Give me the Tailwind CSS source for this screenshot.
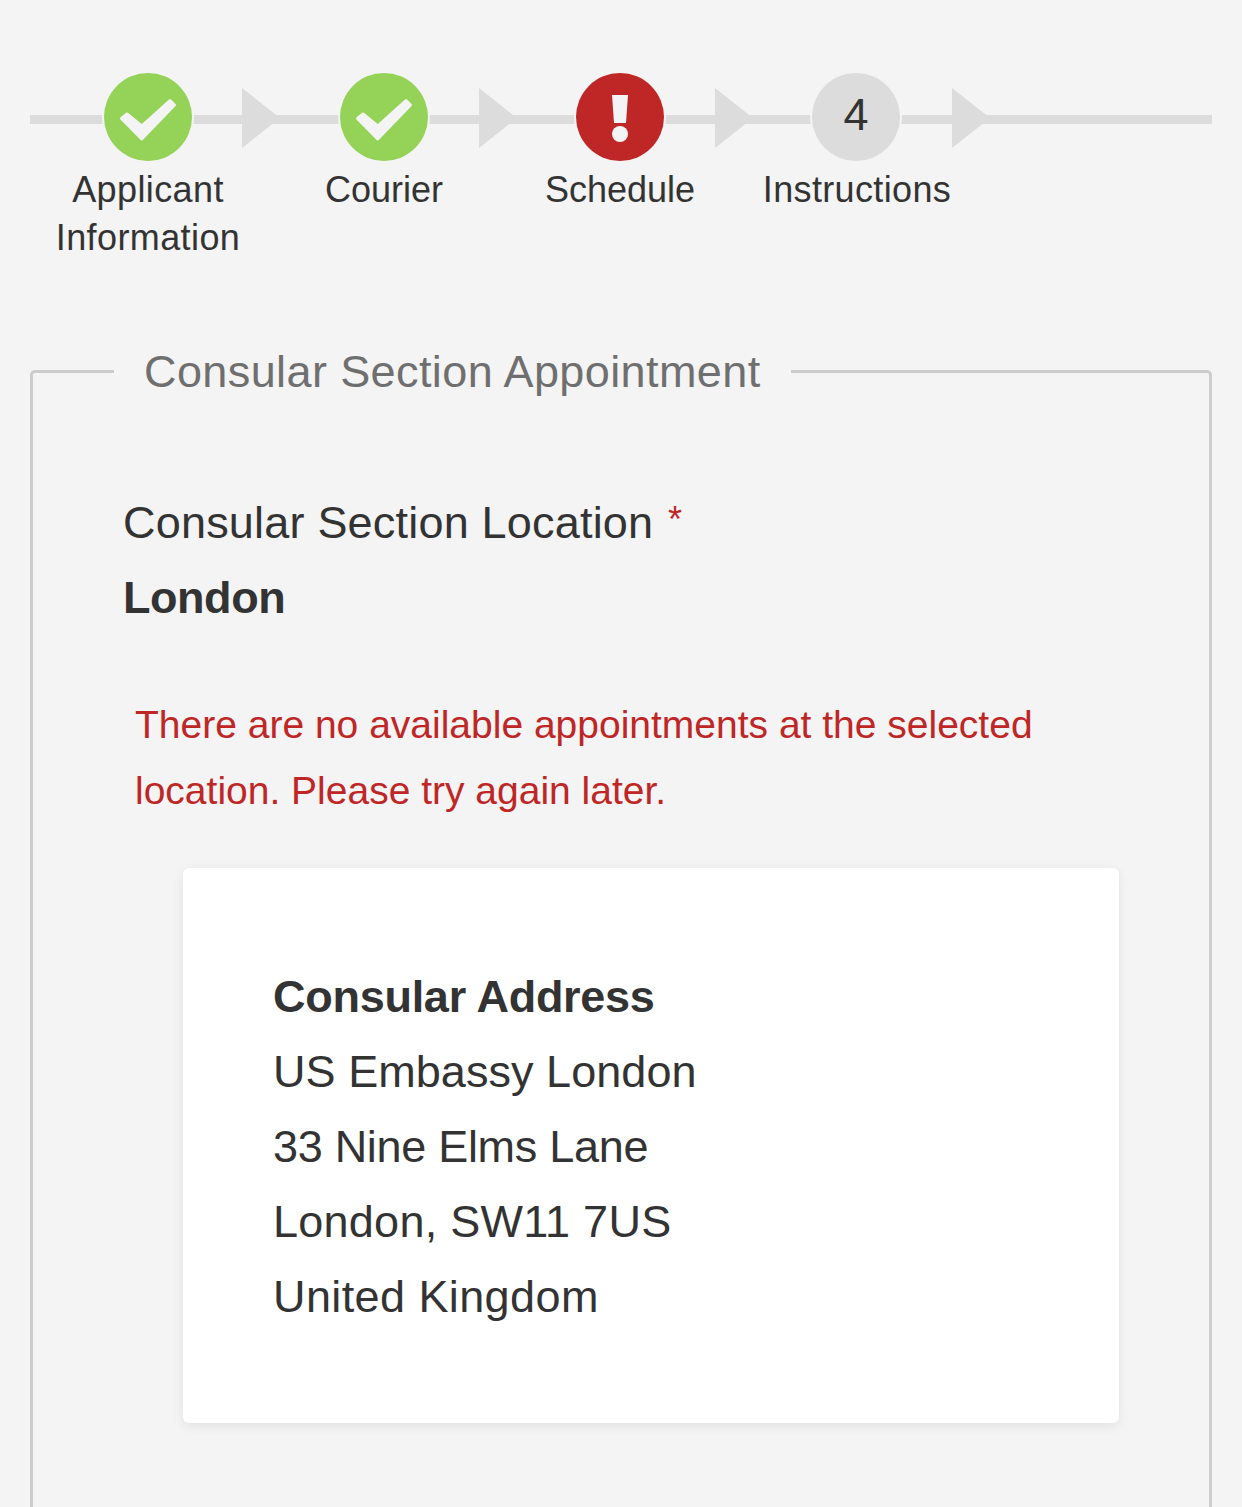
<!DOCTYPE html>
<html>
<head>
<meta charset="utf-8">
<script src="https://cdn.jsdelivr.net/npm/@tailwindcss/browser@4"></script>
</head>
<body class="bg-[#f4f4f4] font-['Liberation_Sans',Arial,sans-serif] text-[#333333] overflow-hidden h-[1507px]">
<div class="px-[30px] pt-[73px]">
  <div class="relative h-[198px]">
    <div class="absolute left-0 right-0 top-[42px] h-[9px] bg-[#dcdcdc]"></div>
    <div class="relative flex">
      <div class="relative w-[236px] flex flex-col items-center">
        <div class="w-[87.5px] h-[87.5px] rounded-full bg-[#94d258] ring-2 ring-[#f4f4f4] flex items-center justify-center">
          <svg class="w-[60px] h-[52px]" viewBox="0 0 60 52"><path d="M52 9.500 L56.500 14 L23.700 48 L3.500 27.500 L9 23 L23.700 35 Z" fill="#f4f4f4" stroke="#f4f4f4" stroke-width="3" stroke-linejoin="round"/></svg>
        </div>
        <div class="mt-[5.5px] text-[36px] leading-[48px] text-center w-[200px] tracking-[0.4px]">Applicant Information</div>
        <svg class="absolute left-[212px] top-[15px] w-[38px] h-[60px]" viewBox="0 0 38 60"><path d="M0 0 L38 30 L0 60 Z" fill="#dcdcdc"/></svg>
      </div>
      <div class="relative w-[236px] flex flex-col items-center">
        <div class="w-[87.5px] h-[87.5px] rounded-full bg-[#94d258] ring-2 ring-[#f4f4f4] flex items-center justify-center">
          <svg class="w-[60px] h-[52px]" viewBox="0 0 60 52"><path d="M52 9.500 L56.500 14 L23.700 48 L3.500 27.500 L9 23 L23.700 35 Z" fill="#f4f4f4" stroke="#f4f4f4" stroke-width="3" stroke-linejoin="round"/></svg>
        </div>
        <div class="mt-[5.5px] text-[36px] leading-[48px] text-center w-[200px]">Courier</div>
        <svg class="absolute left-[213px] top-[15px] w-[38px] h-[60px]" viewBox="0 0 38 60"><path d="M0 0 L38 30 L0 60 Z" fill="#dcdcdc"/></svg>
      </div>
      <div class="relative w-[236px] flex flex-col items-center">
        <div class="w-[87.5px] h-[87.5px] rounded-full bg-[#bf2626] ring-2 ring-[#f4f4f4] flex items-center justify-center">
          <svg class="w-[20px] h-[50px]" viewBox="0 0 20 50"><path d="M2 3 H18 L16 31 H4 Z" fill="#f4f4f4"/><circle cx="10" cy="42" r="8" fill="#f4f4f4"/></svg>
        </div>
        <div class="mt-[5.5px] text-[36px] leading-[48px] text-center w-[200px]">Schedule</div>
        <svg class="absolute left-[213px] top-[15px] w-[38px] h-[60px]" viewBox="0 0 38 60"><path d="M0 0 L38 30 L0 60 Z" fill="#dcdcdc"/></svg>
      </div>
      <div class="relative w-[236px] flex flex-col items-center">
        <div class="w-[87.5px] h-[87.5px] rounded-full bg-[#dcdcdc] ring-2 ring-[#f4f4f4] flex items-center justify-center text-[45px] leading-none pb-[5px]">4</div>
        <div class="mt-[5.5px] text-[36px] leading-[48px] text-center w-[200px] tracking-[0.35px] translate-x-[1px]">Instructions</div>
        <svg class="absolute left-[214px] top-[15px] w-[38px] h-[60px]" viewBox="0 0 38 60"><path d="M0 0 L38 30 L0 60 Z" fill="#dcdcdc"/></svg>
      </div>
    </div>
  </div>

  <fieldset class="mt-[73px] border-[3px] border-[#cccccc] rounded-[5px] h-[1200px] px-[90px]">
    <legend class="-ml-[9px] px-[30px] text-[45px] leading-[54px] text-[#6f6f6f] tracking-[0.4px]"><span class="relative top-[1px]">Consular Section Appointment</span></legend>
    <div class="pt-[84px]">
      <div class="text-[45px] leading-[75px] tracking-[0.2px]">Consular Section Location <span class="text-[#bf2626] text-[36px] align-[6px] ml-[2px]">*</span></div>
      <div class="text-[45px] leading-[75px] font-bold tracking-[-0.45px]">London</div>
    </div>
    <p class="mt-[57px] ml-[12px] text-[39px] leading-[66px] text-[#bf2626] w-[960px]">There are no available appointments at the selected location. Please try again later.</p>
    <div class="mt-[44px] ml-[60px] w-[936px] h-[555px] bg-white rounded-[6px] shadow-[0_3px_12px_rgba(0,0,0,0.08)] pt-[91px] pl-[90px] text-[45px] leading-[75px]">
      <div class="font-bold tracking-[-0.27px]">Consular Address</div>
      <div class="tracking-[0.05px]">US Embassy London</div>
      <div class="tracking-[-0.3px]">33 Nine Elms Lane</div>
      <div class="tracking-[0.25px]">London, SW11 7US</div>
      <div class="tracking-[0.4px]">United Kingdom</div>
    </div>
  </fieldset>
</div>
</body>
</html>
